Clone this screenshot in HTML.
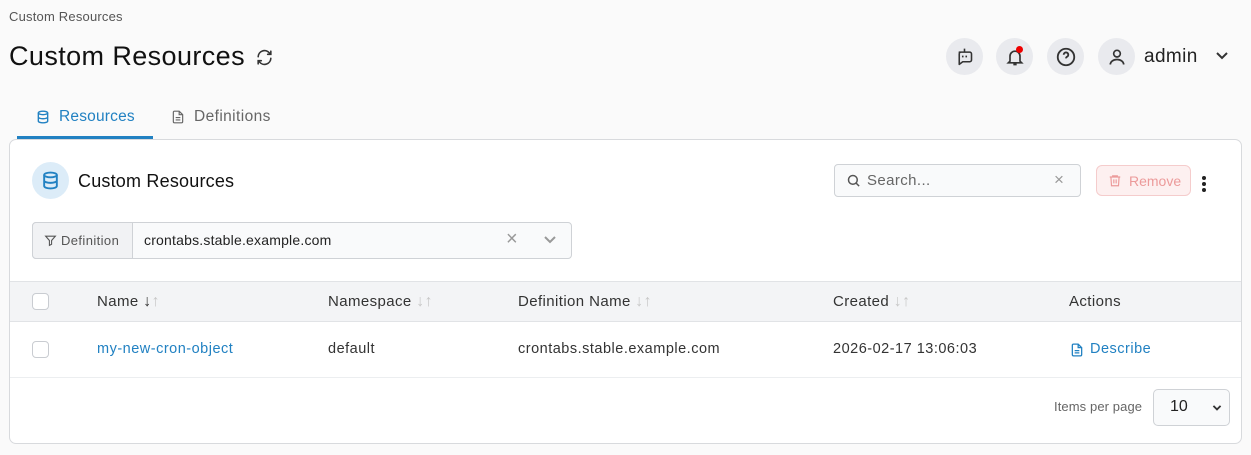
<!DOCTYPE html>
<html><head><style>
*{box-sizing:border-box;margin:0;padding:0}
body{width:1251px;height:455px;background:#fafafa;font-family:"Liberation Sans",sans-serif;color:#1f2328;position:relative;overflow:hidden}
.a{position:absolute}
.circ{position:absolute;width:37px;height:37px;border-radius:50%;background:#e9eaee;display:flex;align-items:center;justify-content:center}
svg{display:block}
.th{position:absolute;top:293px;font-size:15px;color:#333;letter-spacing:.4px}
.td{position:absolute;top:341px;font-size:14.5px;color:#333;letter-spacing:.5px}
.cb{position:absolute;left:32px;width:17px;height:17px;border:1px solid #c9ccd1;border-radius:4px;background:#fff}
.arr{color:#c8c8c8;font-size:16px}
</style></head><body>
<div class="a" style="left:9px;top:9px;font-size:13px;color:#555;letter-spacing:.2px">Custom Resources</div>
<div class="a" style="left:9px;top:41px;font-size:27px;color:#111;letter-spacing:.4px">Custom Resources</div>
<svg class="a" style="left:255px;top:48px" width="19" height="19" viewBox="0 0 24 24" fill="none" stroke="#333" stroke-width="2" stroke-linecap="round"><path d="M4 11a8 8 0 0 1 14-5l2 2M20 4v4h-4M20 13a8 8 0 0 1-14 5l-2-2M4 20v-4h4"/></svg>

<div class="circ" style="left:946px;top:38px"><svg width="21" height="21" viewBox="0 0 24 24" fill="none" stroke="#333" stroke-width="1.8" stroke-linejoin="round"><path d="M12 3v4M6 7h12a2 2 0 0 1 2 2v7a2 2 0 0 1-2 2h-8l-4 3V9a2 2 0 0 1 2-2z"/><path d="M10 11v2M14 11v2"/></svg></div>
<div class="circ" style="left:996px;top:38px"><svg width="20" height="20" viewBox="0 0 24 24" fill="none" stroke="#333" stroke-width="2"><path d="M6 17V11a6 6 0 0 1 12 0v6l2 2H4z M10 21h4"/></svg><div class="a" style="left:20px;top:8px;width:7px;height:7px;border-radius:50%;background:#e00"></div></div>
<div class="circ" style="left:1047px;top:38px"><svg width="22" height="22" viewBox="0 0 24 24" fill="none" stroke="#333" stroke-width="2"><circle cx="12" cy="12" r="9"/><path d="M9.5 9.5a2.5 2.5 0 1 1 3.5 2.3c-.7.4-1 1-1 1.7M12 17h.01"/></svg></div>
<div class="circ" style="left:1098px;top:38px"><svg width="20" height="20" viewBox="0 0 24 24" fill="none" stroke="#333" stroke-width="2"><circle cx="12" cy="8" r="4"/><path d="M4 21a8 6 0 0 1 16 0"/></svg></div>
<div class="a" style="left:1144px;top:46px;font-size:19px;color:#222;letter-spacing:.4px">admin</div>
<svg class="a" style="left:1215px;top:51px" width="14" height="10" viewBox="0 0 14 10" fill="none" stroke="#333" stroke-width="2"><path d="M2 2l5 5 5-5"/></svg>

<svg class="a" style="left:36px;top:110px" width="14" height="14" viewBox="0 0 24 24" fill="none" stroke="#2181c2" stroke-width="2.4"><ellipse cx="12" cy="5" rx="8" ry="3"/><path d="M4 5v14c0 1.7 3.6 3 8 3s8-1.3 8-3V5M4 12c0 1.7 3.6 3 8 3s8-1.3 8-3"/></svg>
<div class="a" style="left:59px;top:108px;font-size:15.5px;color:#2181c2;letter-spacing:.2px">Resources</div>
<div class="a" style="left:17px;top:136px;width:136px;height:3px;background:#2181c2"></div>
<svg class="a" style="left:171px;top:110px" width="14" height="14" viewBox="0 0 24 24" fill="none" stroke="#666" stroke-width="2"><path d="M14 2H6a2 2 0 0 0-2 2v16a2 2 0 0 0 2 2h12a2 2 0 0 0 2-2V8zM14 2v6h6M8 13h8M8 17h8"/></svg>
<div class="a" style="left:194px;top:108px;font-size:15.5px;color:#666;letter-spacing:.4px">Definitions</div>

<div class="a" style="left:9px;top:139px;width:1233px;height:305px;border:1px solid #d8dadd;border-radius:7px;background:#fff;overflow:hidden"></div>
<div class="a" style="left:32px;top:162px;width:37px;height:37px;border-radius:50%;background:#dcecf8"></div>
<svg class="a" style="left:41px;top:171px" width="19" height="19" viewBox="0 0 24 24" fill="none" stroke="#2181c2" stroke-width="2.4"><ellipse cx="12" cy="5" rx="8" ry="3"/><path d="M4 5v14c0 1.7 3.6 3 8 3s8-1.3 8-3V5M4 12c0 1.7 3.6 3 8 3s8-1.3 8-3"/></svg>
<div class="a" style="left:78px;top:171px;font-size:18px;color:#111;letter-spacing:.2px">Custom Resources</div>

<div class="a" style="left:834px;top:164px;width:247px;height:33px;border:1px solid #cfd2d6;border-radius:4px;background:#f9fafb"></div>
<svg class="a" style="left:846px;top:173px" width="15" height="15" viewBox="0 0 24 24" fill="none" stroke="#555" stroke-width="2.4"><circle cx="11" cy="11" r="7"/><path d="M16 16l5 5"/></svg>
<div class="a" style="left:867px;top:172px;font-size:15px;color:#666;letter-spacing:.4px">Search...</div>
<div class="a" style="left:1054px;top:170px;font-size:17px;color:#999">×</div>
<div class="a" style="left:1096px;top:165px;width:95px;height:31px;border:1px solid #f5cccc;border-radius:6px;background:#fdf0f0"></div>
<svg class="a" style="left:1108px;top:173px" width="14" height="15" viewBox="0 0 24 24" fill="none" stroke="#ec9a9a" stroke-width="2"><path d="M3 6h18M8 6V4h8v2M5 6l1 15h12l1-15M10 10v7M14 10v7"/></svg>
<div class="a" style="left:1129px;top:173px;font-size:14px;color:#ec9a9a">Remove</div>
<div class="a" style="left:1202px;top:176px;width:4px;height:4px;border-radius:50%;background:#222;box-shadow:0 6px 0 #222,0 12px 0 #222"></div>

<div class="a" style="left:32px;top:222px;width:540px;height:37px;border:1px solid #cfd2d6;border-radius:4px;background:#f9fafb"></div>
<div class="a" style="left:32px;top:222px;width:101px;height:37px;border:1px solid #cfd2d6;border-radius:4px 0 0 4px;background:#f1f2f4"></div>
<svg class="a" style="left:44px;top:234px" width="13" height="13" viewBox="0 0 24 24" fill="none" stroke="#555" stroke-width="2"><path d="M3 4h18l-7 8v7l-4 2v-9z"/></svg>
<div class="a" style="left:61px;top:233px;font-size:13px;color:#555;letter-spacing:.4px">Definition</div>
<div class="a" style="left:144px;top:232px;font-size:14px;color:#222;letter-spacing:.2px">crontabs.stable.example.com</div>
<div class="a" style="left:506px;top:228px;font-size:20px;color:#999">×</div>
<svg class="a" style="left:543px;top:235px" width="14" height="10" viewBox="0 0 14 10" fill="none" stroke="#999" stroke-width="2"><path d="M2 2l5 5 5-5"/></svg>

<div class="a" style="left:10px;top:281px;width:1231px;height:41px;background:#f3f4f6;border-top:1px solid #e1e3e6;border-bottom:1px solid #e1e3e6"></div>
<div class="cb" style="top:293px"></div>
<div class="th" style="left:97px">Name <span style="color:#333;font-size:16px">↓</span><span class="arr">↑</span></div>
<div class="th" style="left:328px">Namespace <span class="arr">↓↑</span></div>
<div class="th" style="left:518px">Definition Name <span class="arr">↓↑</span></div>
<div class="th" style="left:833px">Created <span class="arr">↓↑</span></div>
<div class="th" style="left:1069px">Actions</div>

<div class="cb" style="top:341px"></div>
<div class="td" style="left:97px;color:#2181c2">my-new-cron-object</div>
<div class="td" style="left:328px">default</div>
<div class="td" style="left:518px">crontabs.stable.example.com</div>
<div class="td" style="left:833px">2026-02-17 13:06:03</div>
<svg class="a" style="left:1071px;top:343px" width="12" height="14" viewBox="0 0 20 24" fill="none" stroke="#2181c2" stroke-width="2.2"><path d="M12 2H4a2 2 0 0 0-2 2v16a2 2 0 0 0 2 2h12a2 2 0 0 0 2-2V8zM12 2v6h6M6 13h8M6 17h8"/></svg>
<div class="td" style="left:1090px;color:#2181c2">Describe</div>
<div class="a" style="left:10px;top:377px;width:1231px;height:1px;background:#eceef0"></div>

<div class="a" style="left:1054px;top:399px;font-size:13px;color:#666;letter-spacing:.1px">Items per page</div>
<div class="a" style="left:1153px;top:389px;width:77px;height:37px;border:1px solid #cfd2d6;border-radius:5px;background:#f9fafb"></div>
<div class="a" style="left:1170px;top:398px;font-size:16px;color:#222">10</div>
<svg class="a" style="left:1212px;top:404px" width="10" height="8" viewBox="0 0 14 10" fill="none" stroke="#333" stroke-width="2.5"><path d="M2 2l5 5 5-5"/></svg>
</body></html>
